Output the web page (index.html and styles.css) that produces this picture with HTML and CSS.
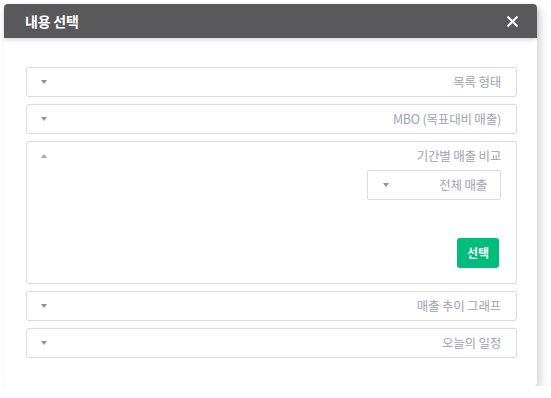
FILE: index.html
```html
<!DOCTYPE html>
<html>
<head>
  <meta charset="utf-8">
  <title>내용 선택</title>
  <link rel="stylesheet" href="styles.css">
</head>
<body>
  <div class="modal">
    <div class="modal-header">
      <span class="modal-title">내용 선택</span>
      <button class="close" type="button">
        <svg width="11" height="11" viewBox="0 0 11 11">
          <path d="M1.2 1.2 L9.8 9.8 M9.8 1.2 L1.2 9.8" stroke="#fff" stroke-width="2" stroke-linecap="square"/>
        </svg>
      </button>
    </div>

    <div class="modal-body">
      <div class="row">
        <div class="row-head">
          <span class="arrow down"></span>
          <span class="label">목록 형태</span>
        </div>
      </div>

      <div class="row">
        <div class="row-head">
          <span class="arrow down"></span>
          <span class="label">MBO (목표대비 매출)</span>
        </div>
      </div>

      <div class="row open">
        <div class="row-head">
          <span class="arrow up"></span>
          <span class="label">기간별 매출 비교</span>
        </div>
        <div class="row-body">
          <div class="select">
            <span class="arrow down"></span>
            <span class="label">전체 매출</span>
          </div>
          <button class="btn-select" type="button">선택</button>
        </div>
      </div>

      <div class="row">
        <div class="row-head">
          <span class="arrow down"></span>
          <span class="label">매출 추이 그래프</span>
        </div>
      </div>

      <div class="row">
        <div class="row-head">
          <span class="arrow down"></span>
          <span class="label">오늘의 일정</span>
        </div>
      </div>
    </div>
  </div>
</body>
</html>
```

FILE: styles.css
```css
body {
  margin: 0;
  background-color: #fff;
  font-family: "Noto Sans CJK KR", "Noto Sans", sans-serif;
}

.modal {
  width: 533px;
  margin: 4px 0 0 4px;
  border-radius: 4px;
  background-color: #fff;
  box-shadow: 4px 4px 8px rgba(0, 0, 0, 0.16);
}

.modal-header {
  display: flex;
  align-items: center;
  height: 34px;
  padding: 0 19px 0 21px;
  background-color: #59595b;
  border-radius: 4px 4px 0 0;
  box-shadow: 0 2px 4px rgba(0, 0, 0, 0.15);
}

.modal-title {
  color: #fff;
  font-size: 14px;
  font-weight: bold;
  letter-spacing: -0.2px;
}

.close {
  display: flex;
  margin-left: auto;
  padding: 0;
  border: none;
  background: none;
  cursor: pointer;
}

.modal-body {
  display: flex;
  flex-direction: column;
  gap: 7.5px;
  padding: 29px 20px 28px 22px;
}

.row {
  border: 1px solid #dcdcdc;
  border-radius: 3px;
}

.row-head {
  display: flex;
  align-items: center;
  height: 27.5px;
  padding: 0 15px 0 14px;
}

.label {
  margin-left: auto;
  color: #9ea3b3;
  font-size: 12.5px;
  letter-spacing: -0.2px;
}

.arrow {
  width: 0;
  height: 0;
  border-left: 3px solid transparent;
  border-right: 3px solid transparent;
}

.arrow.down {
  border-top: 4px solid #8a90a9;
}

.arrow.up {
  border-bottom: 4px solid #a3a8b8;
}

.row-body {
  display: flex;
  flex-direction: column;
  align-items: flex-end;
  padding: 0 15px 15px;
}

.select {
  display: flex;
  align-items: center;
  box-sizing: border-box;
  width: 134px;
  height: 30px;
  padding: 0 13px 0 15px;
  border: 1px solid #dcdcdc;
  border-radius: 2px;
}

.btn-select {
  width: 42px;
  height: 30px;
  margin-top: 38px;
  margin-right: 2px;
  padding: 0;
  border: none;
  border-radius: 3px;
  background-color: #00bd7c;
  color: #fff;
  font-family: inherit;
  font-size: 12px;
  font-weight: bold;
}
```
